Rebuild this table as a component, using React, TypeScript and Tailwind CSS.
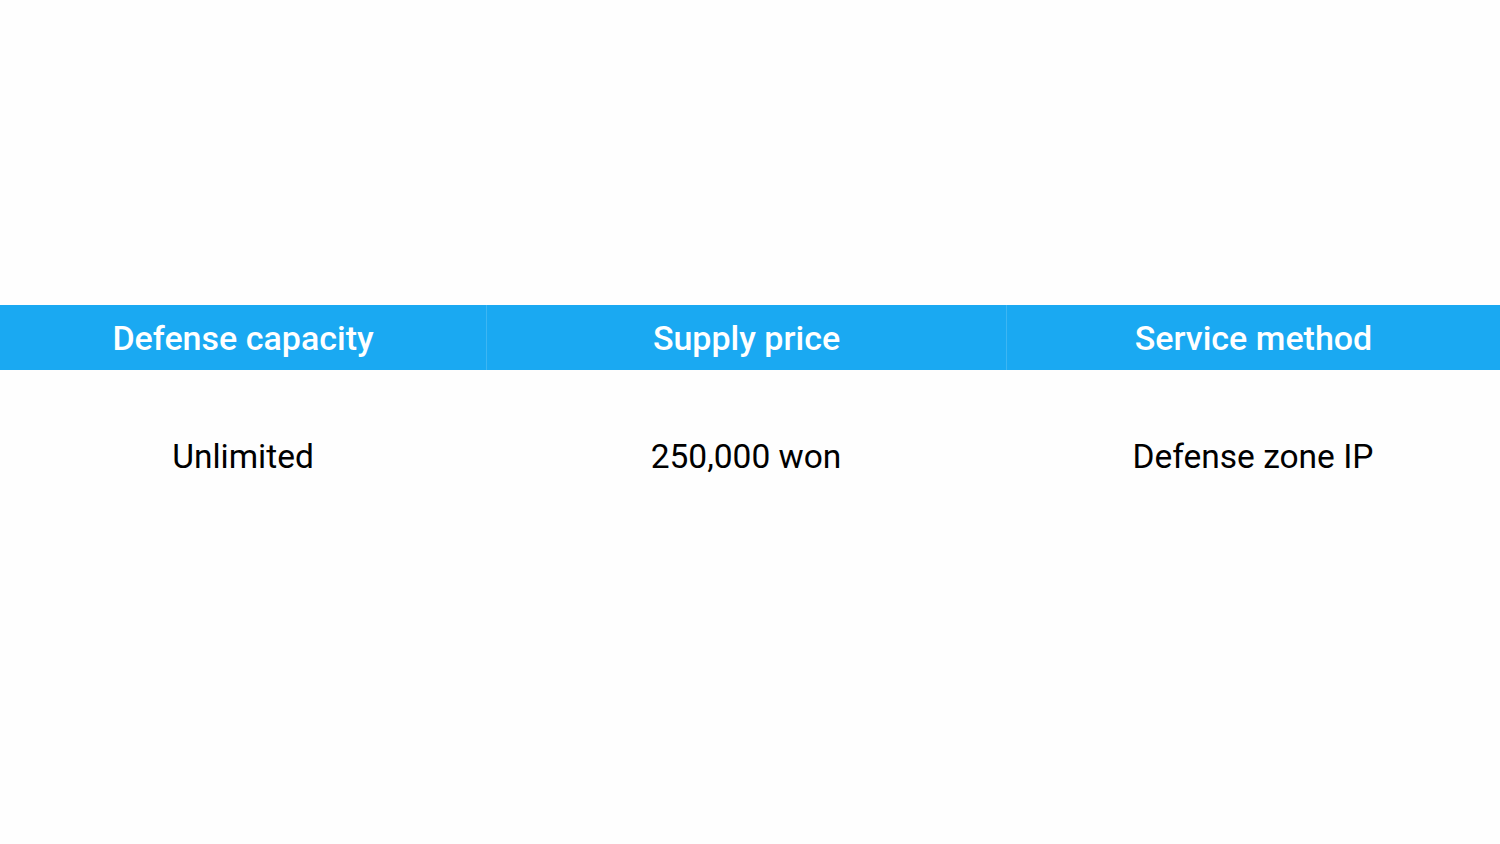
const columns = [
  { head: "Defense capacity", value: "Unlimited" },
  { head: "Supply price", value: "250,000 won" },
  { head: "Service method", value: "Defense zone IP" },
];

export default function App() {
  return (
    <div
      className="min-h-screen w-full bg-[#fefefe] pt-[305px]"
      style={{ fontFamily: "Roboto, 'Noto Sans', sans-serif" }}
    >
      <div className="grid grid-cols-[486px_520px_494px]">
        {columns.map((c, i) => (
          <div
            key={c.head}
            className={`flex h-[65px] items-center justify-center bg-[#1aa9f2] pt-[2px] text-[34px] font-medium text-white ${
              i > 0 ? "border-l border-[#3db6f3]" : ""
            }`}
          >
            {c.head}
          </div>
        ))}
        {columns.map((c) => (
          <div
            key={c.value}
            className="pt-[63px] text-center text-[33.5px] leading-[48px] text-black"
          >
            {c.value}
          </div>
        ))}
      </div>
    </div>
  );
}
